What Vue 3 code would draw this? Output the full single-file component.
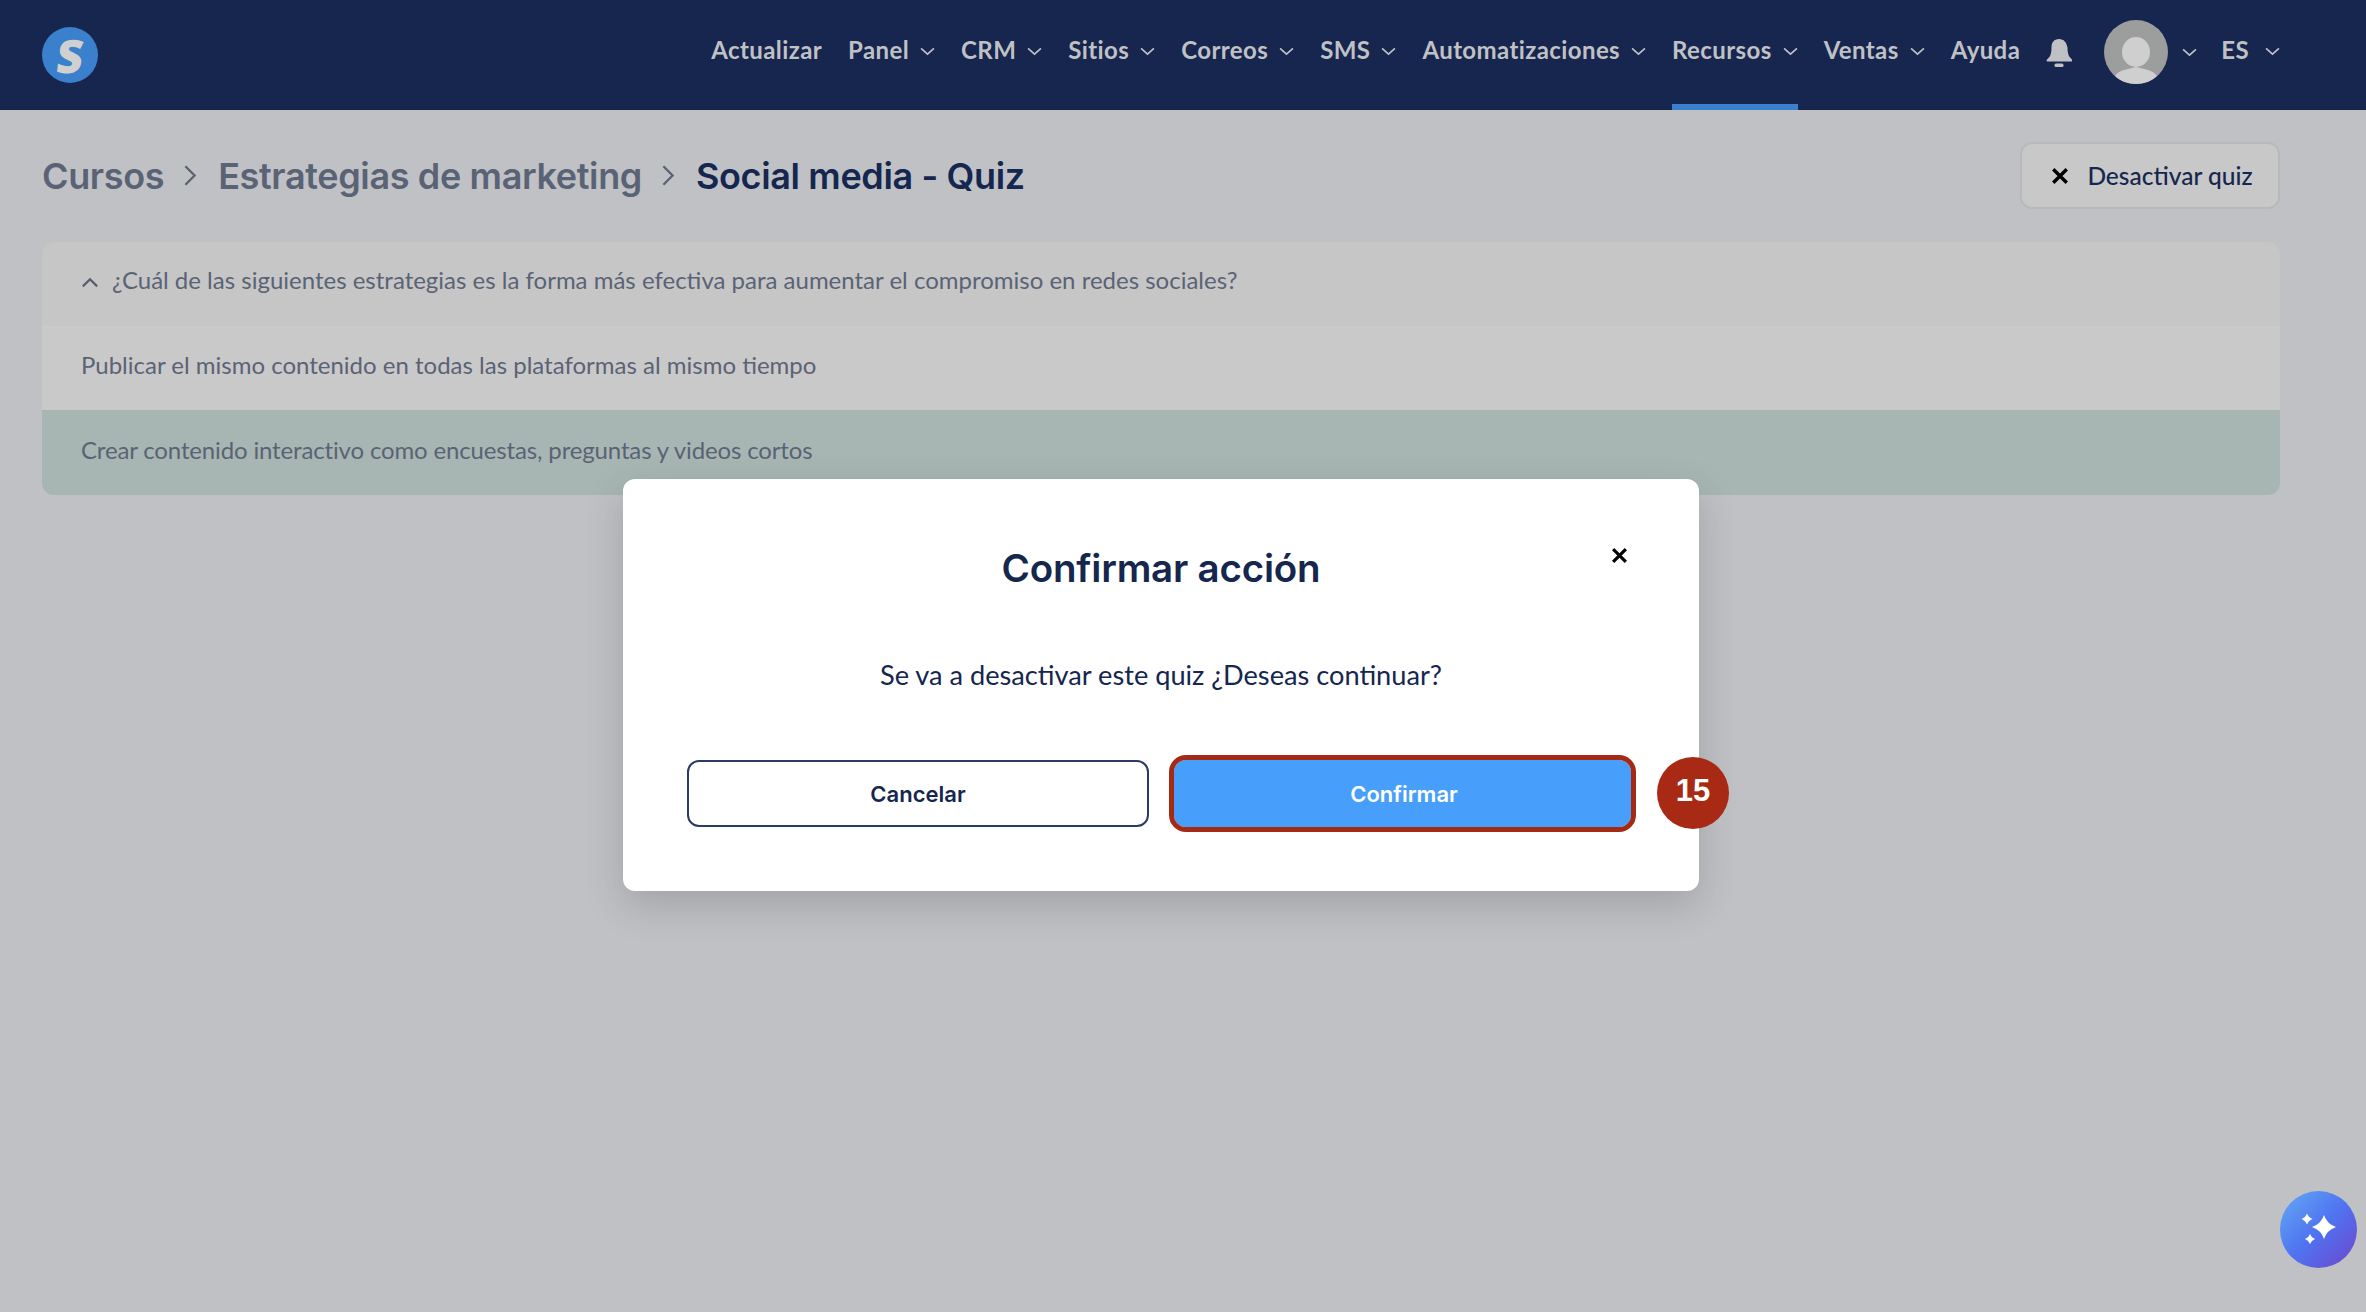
<template>
  <div class="page">
    <header class="topbar">
      <div class="logo"><span>S</span></div>
      <nav class="nav">
        <a v-for="item in navItems" :key="item.label" class="nav-item" :class="{ active: item.active }">
          <span>{{ item.label }}</span>
          <svg v-if="item.menu" class="chev" viewBox="0 0 14 8"><path d="M1 1l6 5.500L13 1" /></svg>
        </a>
        <svg class="bell" viewBox="0 0 26 28">
          <path d="M13 0C8 0 5.500 3.500 5.500 8.500c0 4-.6 6.500-1.500 8.500-.6 1.300-2 2.500-3 3.500-.8.800-.3 2 .8 2h23.400c1.100 0 1.600-1.200.8-2-1-1-2.400-2.200-3-3.500-.9-2-1.500-4.500-1.500-8.500C20.500 3.500 18 0 13 0z" />
          <rect x="8.500" y="24.500" width="9" height="3.500" rx="1.500" />
        </svg>
        <div class="avatar">
          <svg viewBox="0 0 64 64">
            <circle cx="32" cy="32" r="32" fill="#9c9d9d" />
            <ellipse cx="32" cy="32" rx="14" ry="15" fill="#cfcfcf" />
            <path d="M11 56c4-6 13-7 21-9 8 2 17 3 21 9-5 5-13 8-21 8s-16-3-21-8z" fill="#cfcfcf" />
          </svg>
        </div>
        <svg class="chev avatar-chev" viewBox="0 0 14 8"><path d="M1 1l6 5.500L13 1" /></svg>
        <a class="nav-item lang">
          <span>ES</span>
          <svg class="chev" viewBox="0 0 14 8"><path d="M1 1l6 5.500L13 1" /></svg>
        </a>
      </nav>
    </header>

    <main class="content">
      <div class="title-row">
        <div class="crumbs">
          <span>Cursos</span>
          <svg class="crumb-sep" viewBox="0 0 12 20"><path d="M2 2l8 8-8 8" /></svg>
          <span>Estrategias de marketing</span>
          <svg class="crumb-sep" viewBox="0 0 12 20"><path d="M2 2l8 8-8 8" /></svg>
          <span class="current">Social media - Quiz</span>
        </div>
        <button class="off-btn">
          <svg class="x-icon" viewBox="0 0 16 16"><path d="M2 2l12 12M14 2L2 14" /></svg>
          Desactivar quiz
        </button>
      </div>

      <section class="quiz">
        <div class="question">
          <svg class="up" viewBox="0 0 16 10"><path d="M1.500 8.500L8 2l6.500 6.500" /></svg>
          ¿Cuál de las siguientes estrategias es la forma más efectiva para aumentar el compromiso en redes sociales?
        </div>
        <div class="answer">Publicar el mismo contenido en todas las plataformas al mismo tiempo</div>
        <div class="answer correct">Crear contenido interactivo como encuestas, preguntas y videos cortos</div>
      </section>
    </main>

    <div class="modal">
      <svg class="modal-close" viewBox="0 0 16 16"><path d="M2 2l12 12M14 2L2 14" /></svg>
      <h2>Confirmar acción</h2>
      <p>Se va a desactivar este quiz ¿Deseas continuar?</p>
      <div class="modal-actions">
        <button class="btn cancel">Cancelar</button>
        <button class="btn confirm">Confirmar</button>
      </div>
      <div class="step">15</div>
    </div>

    <div class="ai-btn">
      <svg viewBox="0 0 77 77">
        <path d="M44 24Q47 33 56 36Q47 39 44 48Q41 39 32 36Q41 33 44 24z" />
        <path d="M27 22.500Q28.500 26.500 32.500 28Q28.500 29.500 27 33.500Q25.500 29.500 21.500 28Q25.500 26.500 27 22.500z" />
        <path d="M30 43Q31.300 46.700 35 48Q31.300 49.300 30 53Q28.700 49.300 25 48Q28.700 46.700 30 43z" />
      </svg>
    </div>
  </div>
</template>

<script setup>
const navItems = [
  { label: 'Actualizar' },
  { label: 'Panel', menu: true },
  { label: 'CRM', menu: true },
  { label: 'Sitios', menu: true },
  { label: 'Correos', menu: true },
  { label: 'SMS', menu: true },
  { label: 'Automatizaciones', menu: true },
  { label: 'Recursos', menu: true, active: true },
  { label: 'Ventas', menu: true },
  { label: 'Ayuda' },
]
</script>

<style>
body {
  margin: 0;
  background: #c0c1c5;
}
</style>

<style scoped>
.page {
  position: relative;
  height: 1312px;
  overflow: hidden;
  background: #c0c1c5;
  font-family: Lato, "Noto Sans", sans-serif;
  color: #5a6375;
}

.topbar {
  height: 110px;
  background: #16264f;
  display: flex;
  align-items: stretch;
  justify-content: space-between;
  padding: 0 86px 0 42px;
  box-sizing: border-box;
}

.logo {
  width: 56px;
  height: 56px;
  margin-top: 27px;
  border-radius: 50%;
  background: #3a80cc;
  color: #d0d0d0;
  font: 800 46px/56px "Open Sans", sans-serif;
  text-align: center;
}

.logo span {
  display: inline-block;
  transform: skewX(-7deg);
}

.nav {
  display: flex;
  align-items: flex-start;
  color: #c0c1c5;
  font-size: 24px;
  font-weight: 700;
}

.nav-item {
  display: flex;
  align-items: center;
  gap: 11px;
  height: 110px;
  padding-bottom: 5px;
  box-sizing: border-box;
  margin-right: 26px;
  border-bottom: 6px solid transparent;
  letter-spacing: 0.4px;
}

.nav-item.active {
  border-bottom-color: #3a80cc;
}

.chev {
  width: 15px;
  height: 9px;
  margin-top: 3px;
  fill: none;
  stroke: #c0c1c5;
  stroke-width: 1.500;
}

.bell {
  width: 26px;
  height: 28px;
  margin: 39px 32px 0 0;
  fill: #c0c1c5;
}

.avatar {
  width: 64px;
  height: 64px;
  margin-top: 20px;
}

.avatar svg {
  display: block;
  width: 64px;
  height: 64px;
}

.avatar-chev {
  margin: 48px 24px 0 14px;
}

.lang {
  margin-right: 0;
  gap: 16px;
}

.content {
  padding: 32px 86px 0 42px;
}

.title-row {
  display: flex;
  align-items: center;
  justify-content: space-between;
  height: 67px;
}

.crumbs {
  display: flex;
  align-items: center;
  gap: 20px;
  font-family: Inter, sans-serif;
  font-size: 36px;
  font-weight: 600;
  letter-spacing: -0.36px;
}

.current {
  color: #15264f;
}

.crumb-sep {
  width: 14px;
  height: 23px;
  margin-left: -1px;
  margin-right: 1px;
  fill: none;
  stroke: #5a6375;
  stroke-width: 2;
}

.off-btn {
  flex: none;
  width: 260px;
  height: 67px;
  display: flex;
  align-items: center;
  justify-content: center;
  gap: 18px;
  padding-left: 10px;
  background: #c8c8c8;
  border: 2px solid #b8b9bd;
  border-radius: 12px;
  color: #15264f;
  font-family: Lato, sans-serif;
  font-size: 24.500px;
  font-weight: 500;
}

.x-icon {
  width: 18px;
  height: 18px;
  fill: none;
  stroke: #000;
  stroke-width: 3;
}

.quiz {
  margin-top: 33px;
  border-radius: 12px;
  overflow: hidden;
  font-size: 24px;
}

.question {
  height: 83px;
  display: flex;
  align-items: center;
  gap: 13px;
  padding-left: 39px;
  background: #c6c6c6;
  padding-bottom: 8px;
  box-sizing: border-box;
}

.up {
  width: 18px;
  height: 11px;
  margin-top: 5px;
  fill: none;
  stroke: #555d6d;
  stroke-width: 2;
}

.answer {
  height: 85px;
  display: flex;
  align-items: center;
  padding-left: 39px;
  padding-bottom: 6px;
  box-sizing: border-box;
  background: #c9c9c9;
}

.answer.correct {
  background: #a7b6b2;
  letter-spacing: -0.15px;
}

.modal {
  position: absolute;
  left: 623px;
  top: 479px;
  width: 1076px;
  height: 412px;
  box-sizing: border-box;
  padding: 0 63px;
  background: #fff;
  border-radius: 12px;
  box-shadow: 0 14px 40px rgba(0, 0, 0, 0.16);
  color: #15264f;
  text-align: center;
}

.modal h2 {
  margin: 0;
  padding-top: 66px;
  font-family: Inter, sans-serif;
  font-size: 38.500px;
  line-height: 46px;
  font-weight: 600;
  letter-spacing: -0.2px;
}

.modal p {
  margin: 0;
  padding-top: 66px;
  font-size: 27.200px;
  line-height: 36px;
}

.modal-close {
  position: absolute;
  left: 988px;
  top: 68px;
  width: 17px;
  height: 17px;
  fill: none;
  stroke: #000;
  stroke-width: 3;
}

.modal-actions {
  display: flex;
  gap: 25px;
  margin-top: 67px;
}

.btn {
  height: 67px;
  border-radius: 12px;
  font-family: Inter, sans-serif;
  font-size: 22px;
  font-weight: 600;
  box-sizing: border-box;
}

.cancel {
  width: 462px;
  margin-left: 1px;
  background: #fff;
  border: 2px solid #2b3b63;
  color: #15264f;
}

.confirm {
  width: 457px;
  padding-left: 9px;
  background: #479ffb;
  border: none;
  outline: 5px solid #a52a16;
  color: #fff;
}

.step {
  position: absolute;
  left: 1034px;
  top: 278px;
  width: 72px;
  height: 72px;
  border-radius: 50%;
  background: #a82a14;
  color: #fff;
  font: 700 31px/67px "Liberation Sans", sans-serif;
  text-align: center;
}

.ai-btn {
  position: absolute;
  left: 2280px;
  top: 1191px;
  width: 77px;
  height: 77px;
  border-radius: 50%;
  background: linear-gradient(135deg, #62a4f3 5%, #4f74f1 50%, #6b49cf 95%);
}

.ai-btn svg {
  display: block;
  width: 77px;
  height: 77px;
  fill: #fff;
}
</style>
